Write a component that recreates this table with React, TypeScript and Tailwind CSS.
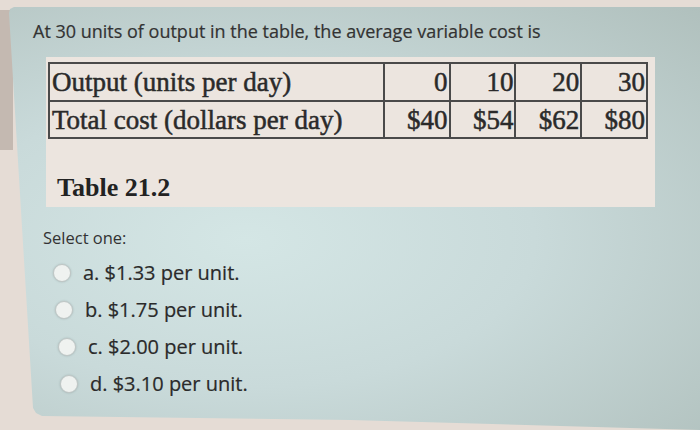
const sans = { fontFamily: '"Open Sans", "Liberation Sans", sans-serif' }
const serif = { fontFamily: '"Liberation Serif", "Times New Roman", serif' }

const outputs = ['0', '10', '20', '30']
const costs = ['$40', '$54', '$62', '$80']

const options = [
  { label: 'a. $1.33 per unit.', indent: 'ml-[20px]' },
  { label: 'b. $1.75 per unit.', indent: 'ml-[22px]' },
  { label: 'c. $2.00 per unit.', indent: 'ml-[25px]' },
  { label: 'd. $3.10 per unit.', indent: 'ml-[27px]' },
]

function Radio() {
  return (
    <span className="block h-[18px] w-[18px] shrink-0 rounded-full border border-[#bfc6c5] bg-[#eff2f0] shadow-[0_0_2px_rgba(90,110,110,0.35)]" />
  )
}

export default function App() {
  return (
    <div className="h-[430px] w-[700px] overflow-hidden bg-[#e5dcd5] bg-[linear-gradient(#c4b9b1,#c4b9b1)] bg-[length:13px_140px] bg-[position:0_10px] bg-no-repeat pt-[7px]">
      <div
        className="h-[423px] bg-[radial-gradient(ellipse_at_35%_55%,#d4e6e5_0%,#c9dada_45%,#b0c0bd_100%)] pl-[33px] pt-[12px] [clip-path:polygon(14px_0,100%_0,100%_100%,350px_413px,42px_409px,36px_406px,33px_401px,9px_6px,10px_2px)]"
        style={sans}
      >
        <h1 className="text-[18px] leading-[24px] text-[#333] [-webkit-text-stroke:0.2px_#333]">
          At 30 units of output in the table, the average variable cost is
        </h1>

        <div className="ml-[13px] mt-[14px] h-[150px] w-[609px] bg-[#ece5df] pl-[2px] pt-[5px]">
          <table
            className="w-[600px] border-collapse border-2 border-[#4a4a4a] text-[27px] leading-[34px] text-[#2a2a2a] [-webkit-text-stroke:0.5px_#2a2a2a]"
            style={serif}
          >
            <tbody>
              <tr className="h-[38px]">
                <td className="w-[337px] border-2 border-[#4a4a4a] pl-[2px]">Output (units per day)</td>
                {outputs.map((v) => (
                  <td key={v} className="w-[66px] border-2 border-[#4a4a4a] pr-[1px] text-right">
                    {v}
                  </td>
                ))}
              </tr>
              <tr className="h-[37px]">
                <td className="border-2 border-[#4a4a4a] pl-[2px]">Total cost (dollars per day)</td>
                {costs.map((v) => (
                  <td key={v} className="border-2 border-[#4a4a4a] pr-[1px] text-right">
                    {v}
                  </td>
                ))}
              </tr>
            </tbody>
          </table>
          <p className="mt-[34px] pl-[9px] text-[26px] font-bold leading-[30px] text-[#222]" style={serif}>
            Table 21.2
          </p>
        </div>

        <p className="ml-[10px] mt-[20px] text-[16.5px] leading-[22px] text-[#333]">Select one:</p>

        <div className="mt-[5px] flex flex-col">
          {options.map((o) => (
            <label key={o.label} className={`${o.indent} flex h-[37px] items-center gap-[12px]`}>
              <Radio />
              <span className="text-[20px] text-[#2a2a2a] [-webkit-text-stroke:0.2px_#2a2a2a]">{o.label}</span>
            </label>
          ))}
        </div>
      </div>
    </div>
  )
}
